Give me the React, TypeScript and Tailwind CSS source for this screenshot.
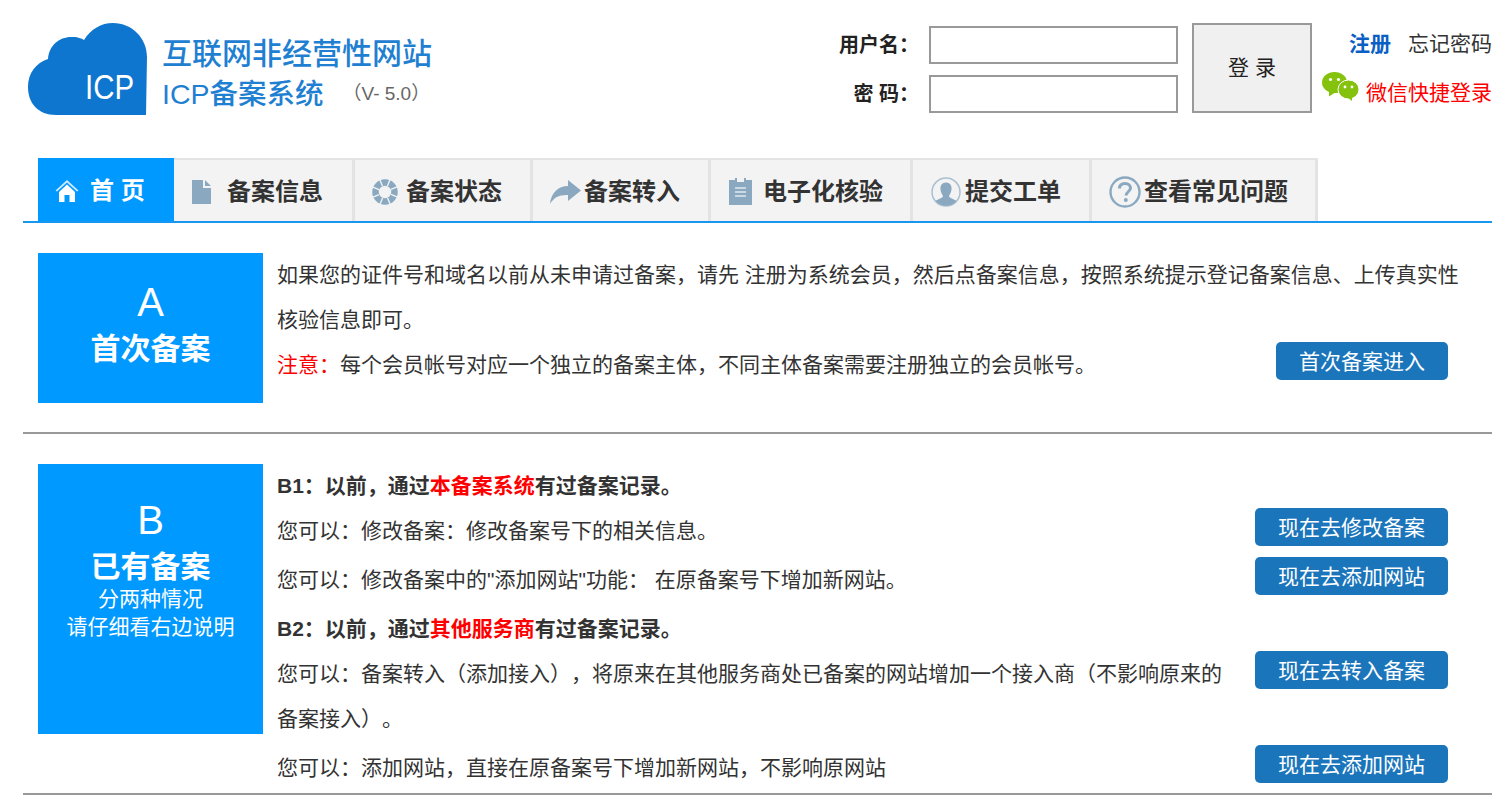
import type { ReactNode } from "react";

const cjk = "font-['Arial','Liberation_Sans','Noto_Sans_CJK_SC',sans-serif]";

function CloudLogo() {
  return (
    <svg width="120" height="96" viewBox="0 0 120 96" className="shrink-0">
      <path
        d="M118 94 L28 94 C10 94 0 82 0 66 C0 52 8 42 20 38 C21 24 32 15 45 16 C51 16 54 18 56 19 C63 8 73 2 85 2 C104 2 119 17 119 36 Z"
        fill="#0f76cf"
      />
      <text x="57" y="78" fill="#fff" fontSize="35" fontFamily="'Liberation Sans', sans-serif" textLength="49" lengthAdjust="spacingAndGlyphs">
        ICP
      </text>
    </svg>
  );
}

function HomeIcon() {
  return (
    <svg width="24" height="24" viewBox="0 0 24 24" className="shrink-0">
      <path d="M0.5 11.5 L12 1 L23.5 11.5 L22 12.5 L12 3.5 L2 12.5 Z" fill="#cfe9ff" />
      <path d="M4 13 L12 5.5 L20 13 V23 H14.5 V16 H9.5 V23 H4 Z" fill="#fff" />
    </svg>
  );
}

function FileIcon() {
  return (
    <svg width="19" height="24" viewBox="0 0 19 24" className="shrink-0">
      <path d="M0 0 H11 V8 H19 V24 H0 Z M13 0 L19 6 H13 Z" fill="#8aa9c0" />
    </svg>
  );
}

function RingIcon() {
  return (
    <svg width="26" height="26" viewBox="0 0 26 26" className="shrink-0">
      <circle cx="13" cy="13" r="9.5" fill="none" stroke="#8aa9c0" strokeWidth="6.5" />
      <g stroke="#f3f3f3" strokeWidth="1.4">
        <path d="M13 0 V6.5 M13 19.5 V26 M0 13 H6.5 M19.5 13 H26" transform="rotate(22 13 13)" />
        <path d="M13 0 V6.5 M13 19.5 V26 M0 13 H6.5 M19.5 13 H26" transform="rotate(67 13 13)" />
      </g>
    </svg>
  );
}

function ShareIcon() {
  return (
    <svg width="31" height="24" viewBox="0 0 31 24" className="shrink-0">
      <path d="M18 0 L31 10.5 L18 21 V15 C10 14.5 4 17 0 24 C1 13 8 6 18 6 Z" fill="#8aa9c0" />
    </svg>
  );
}

function ClipboardIcon() {
  return (
    <svg width="23" height="27" viewBox="0 0 23 27" className="shrink-0">
      <path d="M0 2 H6 V0 H8 V4 H15 V0 H17 V2 H23 V27 H0 Z" fill="#8aa9c0" />
      <path d="M6 10 H17 M6 14 H17 M6 18 H17" stroke="#dfe8ef" strokeWidth="1.5" />
    </svg>
  );
}

function UserIcon() {
  return (
    <svg width="30" height="30" viewBox="0 0 30 30" className="shrink-0">
      <circle cx="15" cy="15" r="14" fill="#f3f3f3" stroke="#a9c0d1" strokeWidth="1.5" />
      <path d="M15 5.5 C19 5.5 21 8.5 20.5 12.5 C20.2 15.5 18.5 18 18 19 C18 21 23 22 25.5 24 C23 27 19 28.8 15 28.8 C11 28.8 7 27 4.5 24 C7 22 12 21 12 19 C11.5 18 9.8 15.5 9.5 12.5 C9 8.5 11 5.5 15 5.5 Z" fill="#8aa9c0" />
    </svg>
  );
}

function QuestionIcon() {
  return (
    <svg width="32" height="32" viewBox="0 0 32 32" className="shrink-0">
      <circle cx="16" cy="16" r="14.5" fill="none" stroke="#8aa9c0" strokeWidth="2.4" />
      <path d="M10.5 12.5 C10.5 9 13 7.5 16 7.5 C19.5 7.5 21.5 9.5 21.5 12 C21.5 15.5 17 16 17 19.5" fill="none" stroke="#8aa9c0" strokeWidth="3" />
      <circle cx="16.8" cy="24" r="2" fill="#8aa9c0" />
    </svg>
  );
}

function WechatIcon() {
  return (
    <svg width="37" height="29" viewBox="0 0 37 29" className="shrink-0">
      <ellipse cx="12.5" cy="10.5" rx="12.5" ry="10.5" fill="#84c20e" />
      <path d="M7 18 L7 24.5 L14 20 Z" fill="#84c20e" />
      <ellipse cx="26.5" cy="17.5" rx="10.5" ry="9.5" fill="#84c20e" stroke="#fff" strokeWidth="1" />
      <path d="M25 25 L30 29 L30 24 Z" fill="#84c20e" />
      <circle cx="8.5" cy="7.5" r="1.6" fill="#fff" />
      <circle cx="16.5" cy="7.5" r="1.6" fill="#fff" />
      <circle cx="23" cy="15" r="1.4" fill="#fff" />
      <circle cx="30" cy="15" r="1.4" fill="#fff" />
    </svg>
  );
}

const tabs: { label: string; icon: ReactNode; width: string; gap: string; pad: string }[] = [
  { label: "备案信息", icon: <FileIcon />, width: "w-[181px]", gap: "gap-[16px]", pad: "pl-[18px]" },
  { label: "备案状态", icon: <RingIcon />, width: "w-[178px]", gap: "gap-[8px]", pad: "pl-[17px]" },
  { label: "备案转入", icon: <ShareIcon />, width: "w-[178px]", gap: "gap-[3px]", pad: "pl-[17px]" },
  { label: "电子化核验", icon: <ClipboardIcon />, width: "w-[202px]", gap: "gap-[11px]", pad: "pl-[18px]" },
  { label: "提交工单", icon: <UserIcon />, width: "w-[179px]", gap: "gap-[4px]", pad: "pl-[18px]" },
  { label: "查看常见问题", icon: <QuestionIcon />, width: "w-[226px]", gap: "gap-[3px]", pad: "pl-[17px]" },
];

function ActionButton({ children, width }: { children: ReactNode; width: string }) {
  return (
    <div className={`${width} h-[38px] rounded-[5px] bg-[#1b75bb] text-white text-[21px] flex items-center justify-center`}>
      {children}
    </div>
  );
}

function Row({ children, button, className }: { children: ReactNode; button?: ReactNode; className?: string }) {
  return (
    <div className={`flex justify-between items-start ${className ?? ""}`}>
      <div>{children}</div>
      {button}
    </div>
  );
}

export default function App() {
  return (
    <div className={`${cjk} [text-spacing-trim:space-all] w-[1507px] h-[800px] overflow-hidden bg-white text-[#333] text-[21px]`}>
      <div className="ml-[23px] w-[1469px]">
        {/* header */}
        <div className="h-[158px] flex">
          <div className="ml-[5px] mt-[21px] flex">
            <CloudLogo />
            <div className="ml-[15px] text-[#1f80d2] font-medium -translate-x-[1px]">
              <div className="text-[30px] leading-[42px] mt-[12px]">互联网非经营性网站</div>
              <div className="text-[28.5px] leading-[38px] flex items-center">
                ICP备案系统
                <span className="ml-[19px] text-[19px] font-normal text-[#666]">（V- 5.0）</span>
              </div>
            </div>
          </div>
          <div className="ml-auto mt-[23px] flex">
            <div className="flex flex-col gap-[11px] mt-[3px]">
              <div className="flex items-center">
                <span className="w-[90px] text-right font-bold text-[20px] text-[#222] mr-[10px]">用户名：</span>
                <div className="w-[249px] h-[38px] border-2 border-[#999] bg-white" />
              </div>
              <div className="flex items-center">
                <span className="w-[90px] text-right font-bold text-[20px] text-[#222] mr-[10px]">密 码：</span>
                <div className="w-[249px] h-[38px] border-2 border-[#999] bg-white" />
              </div>
            </div>
            <div className="ml-[14px] w-[120px] h-[90px] border-2 border-[#999] bg-[#f0f0f0] text-[#222] text-[21px] flex items-center justify-center">
              登 录
            </div>
            <div className="ml-[10px] w-[170px] flex flex-col">
              <div className="flex justify-end gap-[17px] mt-[8px] leading-[26px]">
                <span className="text-[#0a5fc4] font-bold text-[21px]">注册</span>
                <span className="text-[#333] text-[21px]">忘记密码</span>
              </div>
              <div className="flex items-start justify-end mt-[15px]">
                <WechatIcon />
                <span className="ml-[7px] mt-[6px] text-[#f00] text-[21px] leading-[30px] whitespace-nowrap">微信快捷登录</span>
              </div>
            </div>
          </div>
        </div>

        {/* nav */}
        <div className="h-[65px] border-b-2 border-[#1897f0] pl-[15px] flex">
          <div className="w-[136px] h-[63px] pt-[3px] bg-[#0099ff] text-white font-bold text-[24px] flex items-center pl-[17px] gap-[11px]">
            <HomeIcon />
            <span>首 页</span>
          </div>
          {tabs.map((t) => (
            <div
              key={t.label}
              className={`${t.width} ${t.gap} ${t.pad} h-[63px] pt-[2px] bg-[#f3f3f3] border-t-2 border-r-[3px] border-[#e3e3e3] flex items-center font-bold text-[24px] text-[#333]`}
            >
              {t.icon}
              <span>{t.label}</span>
            </div>
          ))}
        </div>

        {/* A */}
        <div className="h-[211px] border-b-2 border-[#999] pl-[15px] pr-[44px] pt-[30px] flex">
          <div className="w-[225px] h-[150px] pt-[25px] bg-[#0099ff] text-white flex flex-col items-center shrink-0">
            <div className="text-[40px] leading-[48px]">A</div>
            <div className="text-[30px] leading-[46px] font-bold">首次备案</div>
          </div>
          <div className="ml-[14px] flex-1 text-[21px] leading-[45px] -mt-[1px]">
            <p className="-mr-[20px]">如果您的证件号和域名以前从未申请过备案，请先 注册为系统会员，然后点备案信息，按照系统提示登记备案信息、上传真实性核验信息即可。</p>
            <Row button={<ActionButton width="w-[172px]">首次备案进入</ActionButton>}>
              <span className="text-[#f00]">注意：</span>每个会员帐号对应一个独立的备案主体，不同主体备案需要注册独立的会员帐号。
            </Row>
          </div>
        </div>

        {/* B */}
        <div className="h-[361px] border-b-2 border-[#999] pl-[15px] pr-[44px] pt-[30px] flex">
          <div className="w-[225px] h-[270px] pt-[32px] bg-[#0099ff] text-white flex flex-col items-center shrink-0">
            <div className="text-[40px] leading-[48px]">B</div>
            <div className="text-[30px] leading-[36px] mt-[5px] font-bold">已有备案</div>
            <div className="text-[21px] leading-[28px]">分两种情况</div>
            <div className="text-[21px] leading-[28px]">请仔细看右边说明</div>
          </div>
          <div className="ml-[14px] flex-1 text-[21px] leading-[45px] -mt-[1px]">
            <div className="font-bold text-[#333]">
              B1：以前，通过<span className="text-[#f00]">本备案系统</span>有过备案记录。
            </div>
            <Row button={<ActionButton width="w-[193px]">现在去修改备案</ActionButton>} className="h-[49px]">
              您可以：修改备案：修改备案号下的相关信息。
            </Row>
            <Row button={<ActionButton width="w-[193px]">现在去添加网站</ActionButton>} className="h-[49px]">
              您可以：修改备案中的"添加网站"功能： 在原备案号下增加新网站。
            </Row>
            <div className="font-bold text-[#333]">
              B2：以前，通过<span className="text-[#f00]">其他服务商</span>有过备案记录。
            </div>
            <Row button={<ActionButton width="w-[193px]">现在去转入备案</ActionButton>} className="h-[94px]">
              <div className="w-[950px]">您可以：备案转入（添加接入），将原来在其他服务商处已备案的网站增加一个接入商（不影响原来的备案接入）。</div>
            </Row>
            <Row button={<ActionButton width="w-[193px]">现在去添加网站</ActionButton>}>
              您可以：添加网站，直接在原备案号下增加新网站，不影响原网站
            </Row>
          </div>
        </div>
      </div>
    </div>
  );
}
